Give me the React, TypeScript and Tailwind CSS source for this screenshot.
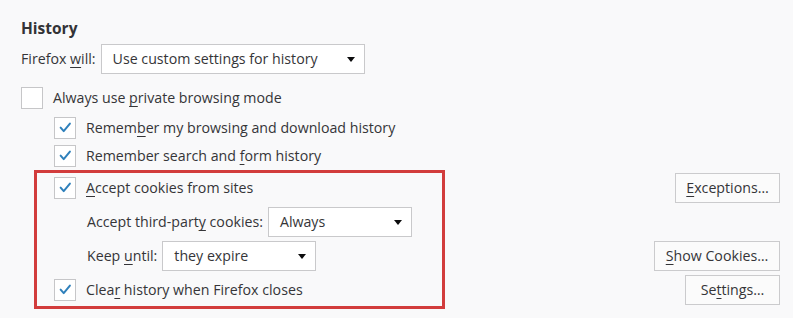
import React from 'react';

// ── small pieces ────────────────────────────────────────────────────────────
const Check = ({ checked }: { checked: boolean }) => (
  <span className="w-[22px] h-[22px] shrink-0 border border-[#c6c6c8] bg-white flex items-center justify-center">
    {checked && (
      <svg width="22" height="22" viewBox="0 0 22 22">
        <path d="M6.2 10.6 L9.6 14.4 L16.4 6.2" fill="none" stroke="#2f80bb" strokeWidth="2.2" strokeLinecap="round" strokeLinejoin="round" />
      </svg>
    )}
  </span>
);

const Arrow = () => (
  <svg width="8" height="5" viewBox="0 0 8 5" className="shrink-0">
    <path d="M0 0 H8 L4 5 Z" fill="#0c0c0d" />
  </svg>
);

const Select = ({ value, w }: { value: string; w: string }) => (
  <div className={`${w} h-[30px] bg-white border border-[#c9c9cb] flex items-center justify-between pl-[11px] pr-[9px]`}>
    <span>{value}</span>
    <Arrow />
  </div>
);

const Button = ({ children, w }: { children: React.ReactNode; w: string }) => (
  <div className={`${w} h-[30px] bg-[#fbfbfb] border border-[#cbcbcd] flex items-center justify-center`}>
    {children}
  </div>
);

const U = ({ c }: { c: string }) => <span className="underline underline-offset-[3px] decoration-1">{c}</span>;

const CheckRow = ({ checked, children }: { checked: boolean; children: React.ReactNode }) => (
  <div className="h-[22px] flex items-center gap-[10px]">
    <Check checked={checked} />
    <span>{children}</span>
  </div>
);

// ── page ────────────────────────────────────────────────────────────────────
export default function App() {
  return (
    <div
      className="w-[793px] h-[318px] bg-[#f9f9fa] text-[#353538] text-[14.2px] leading-[20px] pl-[21px] pr-[13px] pt-[18px] overflow-hidden"
      style={{ fontFamily: '"Open Sans", "Noto Sans", sans-serif' }}
    >
      <h2 className="h-[20px] text-[15.5px] font-bold text-[#333336]">History</h2>

      <div className="mt-[6px] flex items-center gap-[5px]">
        <span>Firefox <U c="w" />ill:</span>
        <Select value="Use custom settings for history" w="w-[264px]" />
      </div>

      <div className="mt-[13px]">
        <CheckRow checked={false}>Always use <U c="p" />rivate browsing mode</CheckRow>
      </div>

      <div className="pl-[33px]">
        <div className="mt-[8px]">
          <CheckRow checked>Remem<U c="b" />er my browsing and download history</CheckRow>
        </div>
        <div className="mt-[6px]">
          <CheckRow checked>Remember search and <U c="f" />orm history</CheckRow>
        </div>
      </div>

      {/* cookie block, red annotation frame over the left part */}
      <div className="relative mt-[6px] flex flex-col gap-[4px]">
        <div className="absolute left-[13px] top-[-3px] w-[411px] h-[139px] border-[3px] border-[#d23c3c] pointer-events-none" />

        <div className="h-[30px] flex items-center justify-between pl-[33px]">
          <CheckRow checked><U c="A" />ccept cookies from sites</CheckRow>
          <Button w="w-[105px]"><U c="E" />xceptions…</Button>
        </div>

        <div className="h-[30px] flex items-center pl-[66px] gap-[5px]">
          <span>Accept third-part<U c="y" /> cookies:</span>
          <Select value="Always" w="w-[144px]" />
        </div>

        <div className="h-[30px] flex items-center justify-between pl-[66px]">
          <div className="flex items-center gap-[5px]">
            <span>Keep <U c="u" />ntil:</span>
            <Select value="they expire" w="w-[154px]" />
          </div>
          <Button w="w-[126px]"><U c="S" />how Cookies…</Button>
        </div>

        <div className="h-[30px] flex items-center justify-between pl-[33px]">
          <CheckRow checked>Clea<U c="r" /> history when Firefox closes</CheckRow>
          <Button w="w-[95px]">Se<U c="t" />tings…</Button>
        </div>
      </div>
    </div>
  );
}
